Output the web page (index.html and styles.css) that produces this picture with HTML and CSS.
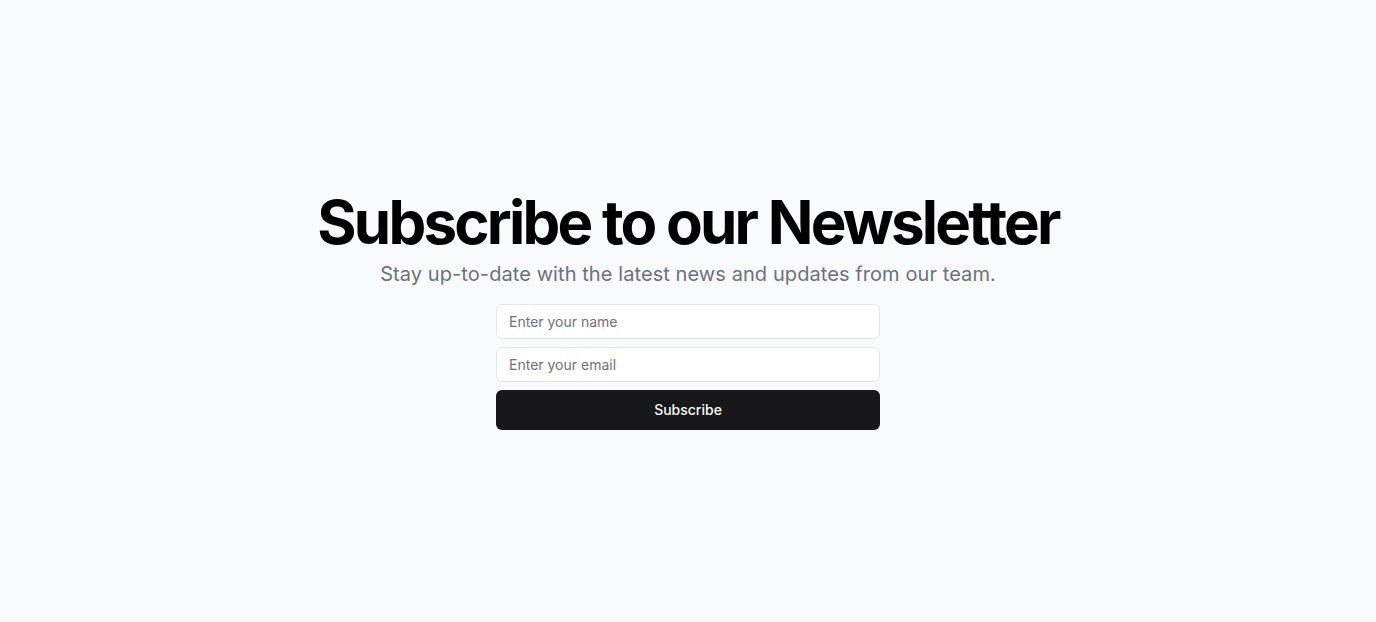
FILE: index.html
```html
<!DOCTYPE html>
<html lang="en">
<head>
<meta charset="utf-8">
<title>Subscribe to our Newsletter</title>
<link rel="stylesheet" href="styles.css">
</head>
<body>
<main class="page">
  <section class="hero">
    <div class="intro">
      <h1 class="title">Subscribe to our Newsletter</h1>
      <p class="subtitle">Stay up-to-date with the latest news and updates from our team.</p>
    </div>
    <form class="form">
      <input class="input" type="text" placeholder="Enter your name">
      <input class="input" type="email" placeholder="Enter your email">
      <button class="button" type="submit">Subscribe</button>
    </form>
  </section>
</main>
</body>
</html>
```
FILE: styles.css
```css
* { box-sizing: border-box; }
html, body { margin: 0; padding: 0; }
body {
  background: #f9fafb;
  font-family: Inter, "Liberation Sans", sans-serif;
  color: #09090b;
}
.page {
  min-height: 622px;
  display: flex;
  align-items: center;
  justify-content: center;
}
.hero {
  display: flex;
  flex-direction: column;
  align-items: center;
  gap: 16px;
  text-align: center;
}
.intro {
  display: flex;
  flex-direction: column;
  align-items: center;
  gap: 8px;
}
.title {
  margin: 0;
  font-size: 60px;
  line-height: 60px;
  font-weight: 700;
  letter-spacing: -2.77px;
  color: #000;
}
.subtitle {
  margin: 0;
  font-size: 20px;
  line-height: 28px;
  letter-spacing: 0.08px;
  color: #6b7280;
}
.form {
  width: 384px;
  display: flex;
  flex-direction: column;
  gap: 8px;
}
.input {
  height: 35px;
  width: 100%;
  padding: 0 12px;
  border: 1px solid #e4e4e7;
  border-radius: 6px;
  background: #fff;
  font-family: Inter, "Liberation Sans", sans-serif;
  font-size: 14px;
  color: #09090b;
  outline: none;
}
.input::placeholder { color: #71717a; }
.button {
  height: 40px;
  width: 100%;
  padding: 0 0 1px;
  border: 0;
  border-radius: 6px;
  background: #18181b;
  color: #fafafa;
  font-family: Inter, "Liberation Sans", sans-serif;
  font-size: 14px;
  font-weight: 500;
  cursor: pointer;
}
```
